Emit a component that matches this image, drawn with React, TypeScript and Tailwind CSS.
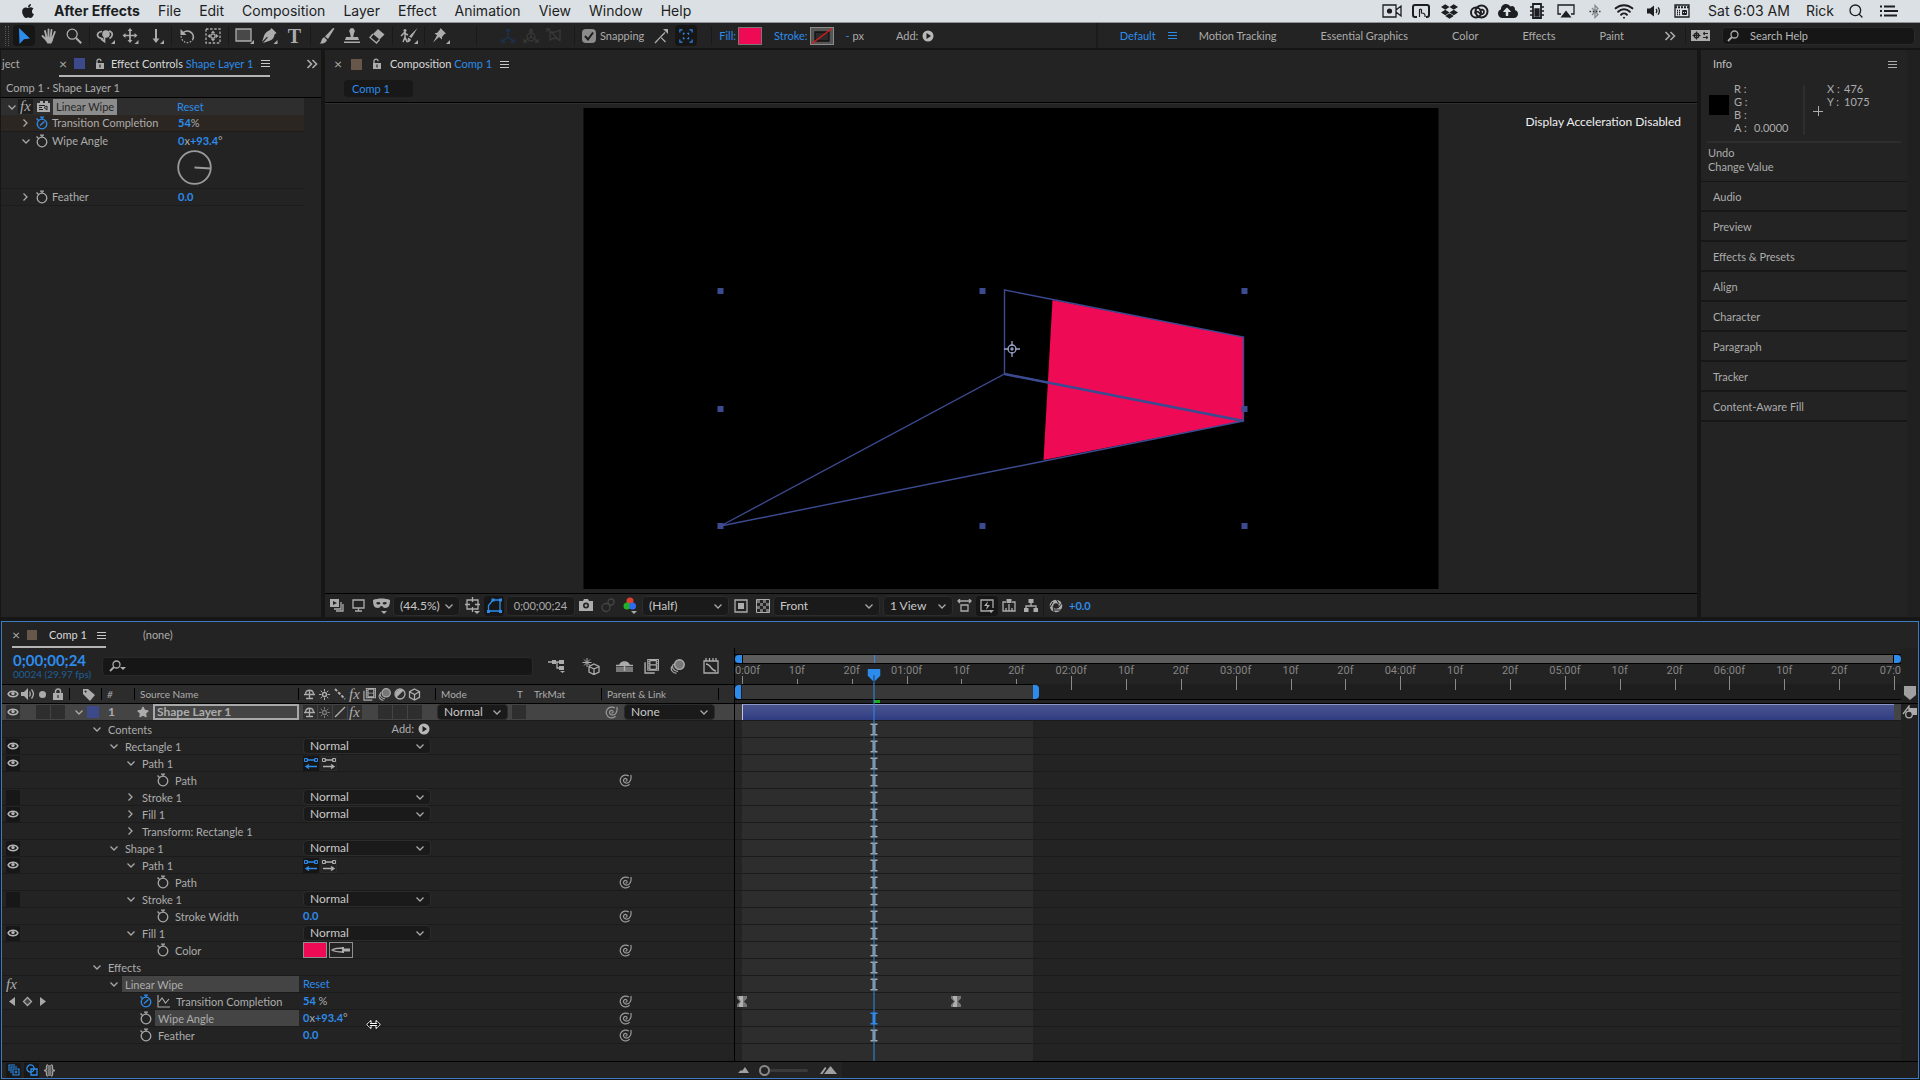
import type { ReactNode } from "react";
import { FaApple, FaCloudUploadAlt, FaDropbox, FaStar } from "react-icons/fa";
import { Search, Wifi } from "lucide-react";

const FRAMES = 210;
const PLAYHEAD = 24;
const WORK_END = 53;

function at(frame: number) {
  return `${(frame / FRAMES) * 100}%`;
}

function Svg(props: { w?: number; h?: number; box?: string; className?: string; children: ReactNode }) {
  const { w = 16, h = 16, box = "0 0 16 16", className = "", children } = props;
  return (
    <svg
      width={w}
      height={h}
      viewBox={box}
      className={`shrink-0 ${className}`}
      fill="none"
      stroke="currentColor"
      strokeWidth="1.3"
      aria-hidden="true"
    >
      {children}
    </svg>
  );
}

/* ---------- small shared icons ---------- */

function Chevron(props: { open?: boolean }) {
  return (
    <Svg w={12} h={12} box="0 0 12 12" className="text-[#a8a8a8]">
      {props.open ? <path d="M2.500 4.500 6 8l3.500-3.500" /> : <path d="M3.500 2.500 7 6 3.500 9.500" />}
    </Svg>
  );
}

function Burger(props: { className?: string }) {
  return (
    <Svg w={9} h={9} box="0 0 9 9" className={props.className}>
      <path strokeWidth="1" d="M0 1.500h9M0 4.500h9M0 7.500h9" />
    </Svg>
  );
}

function Guillemet() {
  return (
    <Svg w={12} h={12} box="0 0 12 12">
      <path strokeWidth="1.600" d="M1.500 2 5.500 6l-4 4M6.500 2l4 4-4 4" />
    </Svg>
  );
}

function OpenLock() {
  return (
    <Svg w={10} h={12} box="0 0 10 12">
      <path d="M2 6V3.200a2 2 0 0 1 4 0" />
      <path fill="currentColor" stroke="none" d="M1 5h8v6H1zM4.400 6.500v3h1.200v-3z" fillRule="evenodd" />
    </Svg>
  );
}

function Stopwatch(props: { on?: boolean }) {
  return (
    <Svg w={14} h={14} box="0 0 14 14" className={props.on ? "text-[#2d8ceb]" : "text-[#a8a8a8]"}>
      <circle cx="7" cy="8" r="4.800" />
      <path d="M5 1.200h4M7 1.200v2M1.500 2.500l2 2" />
      {props.on ? <path d="M5 9.500 9.500 5.500" /> : null}
    </Svg>
  );
}

function Eye() {
  return (
    <Svg w={12} h={10} box="0 0 12 10" className="text-[#b4b4b4]">
      <path strokeWidth="1.500" d="M1 5C3 1.200 9 1.200 11 5 9 8.800 3 8.800 1 5z" />
      <circle cx="6" cy="4.600" r="1.700" fill="currentColor" stroke="none" />
    </Svg>
  );
}

function PickWhip() {
  return (
    <Svg w={13} h={13} box="0 0 13 13" className="text-[#9a9a9a]">
      <path
        strokeWidth="1.200"
        d="M11.800 1C12.800 5 11 9.200 7.600 9.200 5 9.200 3.800 6.800 5 5.200 6.200 3.700 8.400 4.400 8 6.200 7.800 7 7 7.200 6.500 6.800M9.800 2C7.500.4 4 .8 2.200 3.300.2 6.200 1.400 10.600 5 11.700c2 .6 4.200 0 5.600-1.500"
      />
    </Svg>
  );
}

function PlayDot() {
  return (
    <Svg w={12} h={12} box="0 0 12 12" className="text-[#b8b8b8]">
      <circle cx="6" cy="6" r="5.500" fill="currentColor" stroke="none" />
      <path d="M4.500 3 9 6 4.500 9z" fill="#1e1e1e" stroke="none" />
    </Svg>
  );
}

function Shy() {
  return (
    <Svg w={13} h={13} box="0 0 13 13">
      <path d="M1 6.500h11M2.500 6C3 1 10 1 10.500 6M6.500 2v9M3 10.500h7" />
    </Svg>
  );
}

function Sun(props: { dim?: boolean }) {
  return (
    <Svg w={13} h={13} box="0 0 13 13" className={props.dim ? "text-[#777]" : ""}>
      <circle cx="6.500" cy="6.500" r="2" />
      <path
        strokeWidth="1"
        d="M6.500 1v2.500M6.500 9.500V12M1 6.500h2.500M9.500 6.500H12M2.700 2.700l1.600 1.600M8.700 8.700l1.600 1.600M10.300 2.700 8.700 4.300M4.300 8.700l-1.600 1.600"
      />
    </Svg>
  );
}

function Fx() {
  return <span className="font-['Liberation_Serif',serif] text-[15px] leading-none italic">fx</span>;
}

function FilmStack(props: { size?: number }) {
  const s = props.size ?? 13;
  return (
    <Svg w={s} h={s} box="0 0 14 14">
      <path d="M1 3v10h9" />
      <path fill="currentColor" stroke="none" fillRule="evenodd" d="M3 0h11v11H3zM6 2v3h5V2zM6 6v3h5V6z" />
      <path stroke="#222" strokeWidth="1" strokeDasharray="1 1" d="M4.500 1V11M12.500 1V11" />
    </Svg>
  );
}

function Blur(props: { size?: number }) {
  const s = props.size ?? 13;
  return (
    <Svg w={s} h={s} box="0 0 14 14">
      <circle cx="8.800" cy="5.200" r="4.500" fill="#777" />
      <path strokeWidth="1.100" d="M3.300 4.500C1 7.500 3.500 11.700 7.500 11.500M1.800 6.700C0 9.700 2.500 13.500 6 13.200" />
    </Svg>
  );
}

function Cube() {
  return (
    <Svg w={13} h={13} box="0 0 13 13">
      <path d="M6.500 1 11.500 3.700v5.600L6.500 12l-5-2.700V3.700zM1.500 3.700l5 2.800 5-2.800M6.500 6.500V12" />
    </Svg>
  );
}

function IBeam(props: { active?: boolean }) {
  return (
    <Svg w={8} h={13} box="0 0 8 13" className={props.active ? "text-[#2d8ceb]" : "text-[#a8a8a8]"}>
      <path strokeWidth="1.500" d="M.5 1.200h7M.5 11.800h7" />
      <path strokeWidth="3" d="M4 1v11" />
    </Svg>
  );
}

/* ---------- controls ---------- */

function SelectBox(props: { value: string; label: string; className: string }) {
  return (
    <span className={`relative flex shrink-0 items-center rounded-sm border border-[#2c2c2c] bg-[#1a1a1a] ${props.className}`}>
      <select
        aria-label={props.label}
        defaultValue={props.value}
        className="h-full w-full appearance-none bg-transparent pl-1.5 text-[12px] leading-none text-[#c8c8c8] outline-none"
      >
        <option>{props.value}</option>
      </select>
      <span className="pointer-events-none absolute right-1">
        <Chevron open />
      </span>
    </span>
  );
}

function IconButton(props: { label: string; active?: boolean; className?: string; children: ReactNode }) {
  const { label, active, className = "w-[25px]", children } = props;
  return (
    <span className={`flex shrink-0 justify-center ${className}`}>
      <button
        type="button"
        aria-label={label}
        className={`flex h-[21px] w-[22px] items-center justify-center rounded-sm ${active ? "bg-[#161616]" : ""}`}
      >
        {children}
      </button>
    </span>
  );
}

function Sep(props: { className?: string }) {
  return <span className={`h-[19px] w-px shrink-0 bg-[#191919] ${props.className ?? "mx-[3px]"}`} />;
}

/* ---------- macOS menu bar ---------- */

const MENUS = ["File", "Edit", "Composition", "Layer", "Effect", "Animation", "View", "Window", "Help"];

const STATUS: ReactNode[] = [
  <Svg w={20} h={14} box="0 0 20 14">
    <path d="M1 1h13v12H1zM14 6l5-4v10l-5-4" />
    <circle cx="7.500" cy="7" r="2.600" fill="currentColor" stroke="none" />
  </Svg>,
  <Svg w={18} h={14} box="0 0 18 14">
    <path strokeWidth="2" d="M5 13H3a2 2 0 0 1-2-2V3a2 2 0 0 1 2-2h12a2 2 0 0 1 2 2v8a2 2 0 0 1-2 2h-1" />
    <path strokeWidth="1.200" d="M7.500 13V6c0-1.300 2-1.300 2 0v3c2.500 0 3.500.5 3.500 2.500V13" />
  </Svg>,
  <FaDropbox size={17} />,
  <Svg w={20} h={15} box="0 0 20 15">
    <circle cx="12.500" cy="7.500" r="6" strokeWidth="2" />
    <circle cx="7" cy="8.500" r="5" strokeWidth="2" />
    <path strokeWidth="1.800" d="M6 9.500C6 7 9 7 10.500 9c1.500 2 4.500 1.500 4.500-1.200 0-2.300-3-3-4-1" />
  </Svg>,
  <FaCloudUploadAlt size={20} />,
  <Svg w={14} h={16} box="0 0 14 16">
    <path d="M3 1h8v14H3z" strokeWidth="1.800" />
    <path d="M5 6h4v7H5z" fill="currentColor" />
    <path d="M0 4h3M0 8h3M0 12h3M11 4h3M11 8h3M11 12h3" />
  </Svg>,
  <Svg w={18} h={14} box="0 0 18 14">
    <path d="M4 10H1V1h16v9h-3" />
    <path d="m9 6.500 5.500 7h-11z" fill="currentColor" stroke="none" />
  </Svg>,
  <Svg w={12} h={15} box="0 0 12 15" className="text-[#85898e]">
    <path d="m3 4 6 6.500-3 3v-12l3 3L3 11" />
    <path stroke="#33363a" strokeWidth="1.600" strokeDasharray="1.600 1.600" d="M.5 7.500h11" />
  </Svg>,
  <Wifi size={20} strokeWidth={2.4} />,
  <Svg w={14} h={14} box="0 0 14 14">
    <path d="M1 4.500h3L8 1.500v11l-4-3H1z" fill="currentColor" stroke="none" />
    <path d="M10 5c1 1.200 1 2.800 0 4M12 3.300c1.800 2.300 1.800 5 0 7.400" />
  </Svg>,
  <Svg w={16} h={14} box="0 0 16 14">
    <path d="M1 1h14v12H1z" />
    <path d="M1 3.200h14" strokeWidth="2" strokeDasharray="2 1" />
    <path strokeDasharray="1 1" d="M3 6.500h3M3 8.500h3M3 10.500h3" />
    <path strokeWidth="1" d="M8.500 7.500v-1h4v4h-4v-3h4M8.500 9.500h4M10.500 6.500v4" />
  </Svg>,
];

function MenuBar() {
  return (
    <header className="flex h-[23px] shrink-0 items-center justify-between border-b border-[#8f9296] bg-[#dbe0e5] pr-[22px] pl-[20px] font-[Inter,sans-serif] text-[14px] text-[#1c1e21]">
      <nav className="flex items-center gap-[18px]" aria-label="Application menu">
        <FaApple size={16} />
        <button type="button" className="font-bold">After Effects</button>
        {MENUS.map((m) => (
          <button key={m} type="button">{m}</button>
        ))}
      </nav>
      <div className="flex items-center">
        {STATUS.map((icon, i) => (
          <span key={i} className="flex w-[29px] justify-center">{icon}</span>
        ))}
        <span className="pl-3">Sat 6:03 AM</span>
        <span className="pl-4">Rick</span>
        <Search size={16} className="ml-3.5" />
        <Svg w={18} h={12} box="0 0 18 12" className="ml-4">
          <path strokeWidth="1.800" d="M0 1.500h2M4 1.500h11M0 6h2M4 6h14M0 10.500h2M4 10.500h13" />
        </Svg>
      </div>
    </header>
  );
}

/* ---------- tool bar ---------- */

const corner = <path d="M16 12v4h-4z" fill="currentColor" stroke="none" />;

const TOOL_GROUPS: { label: string; icon: ReactNode; active?: boolean }[][] = [
  [
    {
      label: "Selection",
      active: true,
      icon: (
        <Svg className="text-[#2d8ceb]">
          <path d="m3 0 11 10.500-6 .8L3.500 16z" fill="currentColor" stroke="none" />
        </Svg>
      ),
    },
    {
      label: "Hand",
      icon: (
        <Svg>
          <path strokeWidth="1.900" strokeLinecap="round" d="M5.500 9 4 3M7.500 8V1.500M9.800 8l.7-6M11.800 9l2-5M5 11.500 1.500 8" />
          <path d="M4.500 8.500h8.300l-1 4-1.500 3H6.500l-2.500-4z" fill="currentColor" stroke="none" />
        </Svg>
      ),
    },
    {
      label: "Zoom",
      icon: (
        <Svg>
          <circle cx="6.200" cy="6.200" r="5" />
          <path strokeWidth="2" d="m10 10 5.200 5.200" />
        </Svg>
      ),
    },
  ],
  [
    {
      label: "Orbit camera",
      icon: (
        <Svg w={19} h={16} box="0 0 19 16">
          <circle cx="10" cy="6" r="3.800" fill="currentColor" stroke="none" />
          <path strokeWidth="1.700" d="M6 3.500C1 4 .5 7.500 3 9.500l4 1.500M13 3c4 1 4.500 5 .5 7.500M8.500 9v4.500L5 11" />
          <path d="M19 12v4h-4z" fill="currentColor" stroke="none" />
        </Svg>
      ),
    },
    {
      label: "Track XY camera",
      icon: (
        <Svg w={17}>
          <path strokeWidth="1.700" d="M7.500 2v11M2 7.500h11" />
          <path d="M7.500 0 10 3H5zM7.500 15 5 12h5zM0 7.500 3 5v5zM15 7.500 12 10V5z" fill="currentColor" stroke="none" />
          {corner}
        </Svg>
      ),
    },
    {
      label: "Track Z camera",
      icon: (
        <Svg>
          <path strokeWidth="2" d="M8 1v11" />
          <path d="M8 15 4.500 10.500h7z" fill="currentColor" stroke="none" />
          {corner}
        </Svg>
      ),
    },
  ],
  [
    {
      label: "Rotation",
      icon: (
        <Svg w={17}>
          <path strokeWidth="1.700" d="M3 5.500A6 6 0 0 1 13.500 11" />
          <path strokeDasharray="1.500 1.500" d="M13.500 11A6 6 0 1 1 2.300 6" />
          <path d="M1 1v6h6z" fill="currentColor" stroke="none" />
        </Svg>
      ),
    },
    {
      label: "Pan behind",
      icon: (
        <Svg>
          <path strokeDasharray="2.500 1.600" d="M1 1h14v14H1z" />
          <circle cx="8" cy="8" r="2.200" />
          <path d="M8 2.500 10 5H6zM8 13.500 6 11h4zM2.500 8 5 6v4zM13.500 8 11 10V6z" fill="currentColor" stroke="none" />
        </Svg>
      ),
    },
  ],
  [
    {
      label: "Rectangle",
      icon: (
        <Svg w={19} h={17} box="0 0 19 17">
          <path d="M1 2h15v12H1z" fill="#484848" />
          <path d="M19 13v4h-4z" fill="currentColor" stroke="none" />
        </Svg>
      ),
    },
    {
      label: "Pen",
      icon: (
        <Svg w={17}>
          <path
            d="m10 0 5 5-2 1.500c-.5 4-3 6-7 7L1.500 15l4.800-5.500-.8-.8L.5 14 2 9.500c1-4 3-6 6.500-7.500z"
            fill="currentColor"
            stroke="none"
          />
          {corner}
        </Svg>
      ),
    },
    {
      label: "Type",
      icon: <span className="font-['Liberation_Serif',serif] text-[20px] leading-none font-bold">T</span>,
    },
  ],
  [
    {
      label: "Brush",
      icon: (
        <Svg>
          <path
            d="M15.500.5 9 11 6 8.500 14 0zM5.300 9.300 8 12c-.8 3-4.500 4-7.500 3.500C3 14.500 2 10 5.300 9.300z"
            fill="currentColor"
            stroke="none"
          />
        </Svg>
      ),
    },
    {
      label: "Clone stamp",
      icon: (
        <Svg>
          <path
            d="M8 0a3 3 0 0 1 2 5l-.8 4H14l1 3H1l1-3h4.800L6 5a3 3 0 0 1 2-5zM0 13.500h16V15H0z"
            fill="currentColor"
            stroke="none"
          />
        </Svg>
      ),
    },
    {
      label: "Eraser",
      icon: (
        <Svg>
          <path d="m9 1 6.500 5.500-5 5L4 6z" fill="currentColor" stroke="none" />
          <path d="M4 6 1 9.500 7.500 15l3-3.500" />
        </Svg>
      ),
    },
  ],
  [
    {
      label: "Roto brush",
      icon: (
        <Svg w={18} h={16} box="0 0 18 16">
          <circle cx="5" cy="2.500" r="1.500" fill="currentColor" stroke="none" />
          <path strokeWidth="1.500" d="M5 4v5l-2 5M5 9l2 5M1 8l3-3 4 2" />
          <path
            d="M17.500 0 11.500 10 9 8.500zM8.500 9.500l2.500 2c-.5 2-2 3-4.500 3 1.500-1 .5-4 2-5zM18 12v4h-4z"
            fill="currentColor"
            stroke="none"
          />
        </Svg>
      ),
    },
  ],
  [
    {
      label: "Puppet pin",
      icon: (
        <Svg w={18} h={16} box="0 0 18 16">
          <path
            d="m8.500 0 5.500 5.500-1.500.5-2.500 3v2.500L7 9 1 14.500 5 7.500 2.500 5H5l3-3.500zM18 12v4h-4z"
            fill="currentColor"
            stroke="none"
          />
        </Svg>
      ),
    },
  ],
];

function ToolBar() {
  return (
    <div className="flex h-[27px] shrink-0 items-center border-b-2 border-[#151515] bg-[#232323] pr-[5px]">
      <span className="mr-0.5 ml-[5px] h-5 w-1 shrink-0 border-x border-dotted border-[#555]" />
      {TOOL_GROUPS.map((group, i) => (
        <div key={i} className="flex items-center">
          {i > 0 ? <Sep /> : null}
          {group.map((t) => (
            <IconButton key={t.label} label={t.label} active={t.active}>{t.icon}</IconButton>
          ))}
        </div>
      ))}
      <Sep className="mr-[19px] ml-[23px]" />
      <div className="flex items-center text-[#383838]">
        <IconButton label="Local axis" className="w-[23px] text-[#1b3350]">
          <Svg>
            <path d="M8 9V2M8 9l-5 4M8 9l5 4M6 3.500 8 1l2 2.500M2 10.500V14h3.500M14 10.500V14h-3.500" />
          </Svg>
        </IconButton>
        <IconButton label="World axis" className="w-[23px]">
          <Svg>
            <circle cx="8" cy="9" r="4" />
            <path d="M8 9V2M8 9l-6 4M8 9l6 4M6 3.500 8 1l2 2.500M1 11v3h3M15 11v3h-3" />
          </Svg>
        </IconButton>
        <IconButton label="View axis" className="w-[23px]">
          <Svg>
            <path d="M4 4c4 1 6 0 10-2v10c-3-2-6-3-10 0zM2 1l12 12M1 4V1h3" />
          </Svg>
        </IconButton>
      </div>
      <Sep className="mr-[7px] ml-[9px]" />
      <label className="flex items-center gap-1">
        <span className="relative flex size-[14px]">
          <input type="checkbox" defaultChecked className="size-[14px] appearance-none rounded-sm bg-[#8b8b8b]" />
          <Svg w={14} h={14} box="0 0 14 14" className="pointer-events-none absolute text-[#1c1c1c]">
            <path strokeWidth="2" d="m3 7 3 3.500L11 3.500" />
          </Svg>
        </span>
        Snapping
      </label>
      <IconButton label="Snap edges" className="ml-1 w-[25px]">
        <Svg>
          <path d="M2 15 7.500 9l5 5M7.500 9 12 4.500" strokeDasharray="8 1" />
          <path d="M10 1h5v5z" fill="currentColor" stroke="none" />
        </Svg>
      </IconButton>
      <IconButton label="Snap features" active className="w-[25px] text-[#2d8ceb]">
        <Svg w={14} h={14}>
          <path d="M1 4V1h3M12 1h3v3M15 12v3h-3M4 15H1v-3M5 6.500V5h1.500M9.500 5H11v1.500M11 9.500V11H9.500M6.500 11H5V9.500" />
        </Svg>
      </IconButton>
      <Sep className="mr-[7px] ml-[13px]" />
      <button type="button" className="text-[#2d8ceb]">Fill:</button>
      <button type="button" aria-label="Fill color" className="ml-0.5 h-[18px] w-6 border border-[#777] bg-[#ee0a55]" />
      <button type="button" className="ml-3 text-[#2d8ceb]">Stroke:</button>
      <button type="button" aria-label="Stroke color" className="ml-0.5 h-[18px] w-6 border border-[#8b8b8b] bg-[#555]">
        <Svg w={22} h={16} box="0 0 22 16">
          <path d="M4 4h14v9H4z" fill="#2a2a2a" stroke="#111" />
          <path d="M1 15.500 21 .5" stroke="#e01b1b" />
        </Svg>
      </button>
      <span className="ml-3"><span className="text-[#2d8ceb]">-</span> px</span>
      <button type="button" className="ml-8 flex items-center gap-1">Add:<PlayDot /></button>

      <nav className="ml-auto flex h-full items-center border-l-2 border-[#1b1b1b] pl-[22px]" aria-label="Workspaces">
        <button type="button" className="text-[#2d8ceb]">Default</button>
        <Burger className="ml-3 text-[#2d8ceb]" />
        <button type="button" className="ml-[22px]">Motion Tracking</button>
        <button type="button" className="ml-[44px]">Essential Graphics</button>
        <button type="button" className="ml-[44px]">Color</button>
        <button type="button" className="ml-[44px]">Effects</button>
        <button type="button" className="ml-[44px]">Paint</button>
      </nav>
      <button type="button" aria-label="More workspaces" className="ml-[40px]"><Guillemet /></button>
      <Sep className="mr-[5px] ml-[9px]" />
      <Svg w={19} h={11} box="0 0 19 11">
        <path d="M0 0h19v11H0z" fill="currentColor" stroke="none" />
        <circle cx="5.500" cy="5.500" r="2.300" stroke="#222" strokeWidth="1.500" />
        <path stroke="#222" strokeWidth="1" d="M5.500 1.500v8M1.500 5.500h8M12 3.500h5M12 7.500h5M14 2l-2 1.500L14 5M15 6l2 1.500L15 9" />
      </Svg>
      <label className="ml-3 flex h-[18px] w-[193px] items-center rounded-sm border border-[#2a2a2a] bg-[#161616] pl-1">
        <Svg w={12} h={12} box="0 0 12 12">
          <circle cx="7.500" cy="4.500" r="3.500" />
          <path strokeWidth="1.800" d="M5 7 1 11" />
        </Svg>
        <input
          aria-label="Search Help"
          placeholder="Search Help"
          className="ml-[11px] w-full bg-transparent outline-none placeholder:text-[#b8b8b8]"
        />
      </label>
    </div>
  );
}

/* ---------- effect controls ---------- */

function EffectControls() {
  return (
    <section className="flex w-80 shrink-0 flex-col bg-[#232323]">
      <div className="flex h-[27px] items-center pl-px">
        <span className="w-[57px]">ject</span>
        <div className="flex h-full items-center border-b-2 border-[#b4b4b4] pt-0.5">
          <span className="w-[15px] text-[14px] leading-none">×</span>
          <span className="size-[11px] bg-[#3c4a8c]" />
          <span className="mr-1.5 ml-2.5"><OpenLock /></span>
          <span className="whitespace-nowrap text-[#d8d8d8]">Effect Controls <span className="text-[#2d8ceb]">Shape Layer 1</span></span>
          <Burger className="ml-2 text-[#c8c8c8]" />
        </div>
        <span className="mr-[3px] ml-auto"><Guillemet /></span>
      </div>
      <div className="flex h-[21px] items-center border-b border-black pt-0.5 pl-[5px]">Comp 1 · Shape Layer 1</div>
      <div className="mr-[17px]">
        <div className="flex h-[17px] items-center bg-[#2e2e2e] pl-[5px]">
          <Chevron open />
          <span className="flex h-[15px] w-[15px] items-center justify-center bg-[#1e1e1e]"><Fx /></span>
          <Svg w={13} h={13} box="0 0 13 13" className="ml-1">
            <path d="M0 3h3V1h3v2h2V1h3v2h2v9H0z" fill="currentColor" stroke="none" />
            <path stroke="#222" strokeWidth="1" d="M2 5.500h6M2 7.500h3M2 9.500h4M7 7.500l3-1.500v4z" />
          </Svg>
          <span className="ml-[3px] bg-[#8c8c8c] px-[3px] text-[#262626]">Linear Wipe</span>
          <button type="button" className="ml-auto w-[127px] text-left text-[#2d8ceb]">Reset</button>
        </div>
        <div className="flex h-[17px] items-center border-b border-[#1c1c1c] bg-[#2b2622] pl-[19px]">
          <Chevron />
          <span className="mr-[3px] ml-[3px]"><Stopwatch on /></span>
          Transition Completion
          <span className="ml-auto w-[126px]"><span className="font-bold text-[#2d8ceb]">54</span>%</span>
        </div>
        <div className="flex h-[17px] items-center pl-[19px]">
          <Chevron open />
          <span className="mr-[3px] ml-[3px]"><Stopwatch /></span>
          Wipe Angle
          <span className="ml-auto w-[126px]">
            <span className="font-bold text-[#2d8ceb]">0</span>x<span className="font-bold text-[#2d8ceb]">+93.4</span>°
          </span>
        </div>
        <div className="flex h-[40px] justify-end border-b border-[#1c1c1c] pt-px">
          <div className="w-[127px]">
            <Svg w={35} h={35} box="0 0 35 35" className="text-[#9a9a9a]">
              <circle cx="17.500" cy="17.500" r="16.300" strokeWidth="1.800" />
              <path strokeWidth="2" d="m17.500 17.500 16 1" />
            </Svg>
          </div>
        </div>
        <div className="flex h-[17px] items-center border-b border-[#1c1c1c] pl-[19px]">
          <Chevron />
          <span className="mr-[3px] ml-[3px]"><Stopwatch /></span>
          Feather
          <span className="ml-auto w-[126px] font-bold text-[#2d8ceb]">0.0</span>
        </div>
      </div>
    </section>
  );
}

/* ---------- composition viewer ---------- */

const HANDLES = [
  [137, 183], [399, 183], [661, 183],
  [137, 301], [661, 301],
  [137, 418], [399, 418], [661, 418],
];

function CompCanvas() {
  return (
    <svg viewBox="0 0 855 481" className="h-full w-full" role="img" aria-label="Comp 1">
      <rect width="855" height="481" fill="#000" />
      <polygon points="469,192 660,229 660,313 460,352" fill="#ee0a55" />
      <g fill="none" stroke="#3c4a90" strokeWidth="1.400">
        <polygon points="421,182 660,229 660,313 421,266" />
        <polygon points="421,266 660,313 137,418" />
        <path d="M421 266 660 313" strokeWidth="2.400" />
      </g>
      {HANDLES.map(([x, y]) => (
        <rect key={`${x}-${y}`} x={x - 3} y={y - 3} width="6" height="6" fill="#3c4a90" />
      ))}
      <g transform="translate(428.5 241)" fill="none" stroke="#9aa4cc" strokeWidth="1.300">
        <circle r="4" />
        <circle r="1" />
        <path d="M0-8v5M0 8V3M-8 0h5M8 0H3" />
      </g>
    </svg>
  );
}

function ViewerBar() {
  return (
    <div className="flex h-6 shrink-0 items-center border-t border-black pl-[5px]">
      <Svg w={14} h={13} box="0 0 14 13">
        <path d="M0 0h9v8H0z" fill="currentColor" stroke="none" />
        <path d="m3 2 4 2-4 2z" fill="#222" stroke="none" />
        <path d="M11 3v7H4M13 5v7H6" />
      </Svg>
      <Svg w={13} h={13} box="0 0 13 13" className="ml-2"><path d="M1 1h11v8H1zM6.500 9v3M3 12h7" /></Svg>
      <Svg w={17} h={16} box="0 0 17 16" className="ml-2">
        <path
          d="M0 2c5-2 12-2 17 0 0 5-1 8-5 8-2 0-2-2-3.500-2S7 10 5 10C1 10 0 7 0 2zM3 5c1.500 2 3.500 2 4.500 0-1-1.500-3.500-1.500-4.500 0zm6.500 0c1 2 3 2 4.500 0-1-1.500-3.500-1.500-4.500 0z"
          fillRule="evenodd"
          fill="currentColor"
          stroke="none"
        />
        <path d="M8 13h6l-3 3z" fill="currentColor" stroke="none" />
      </Svg>
      <SelectBox label="Magnification" value="(44.5%)" className="ml-[3px] h-5 w-[67px]" />
      <Svg w={15} h={17} box="0 0 15 17" className="ml-[5px]">
        <path d="M2 3h11v9H2zM7.500 0v5M7.500 10v5M0 7.500h5M10 7.500h5" />
        <path d="M9 14h6l-3 3z" fill="currentColor" stroke="none" />
      </Svg>
      <button type="button" aria-label="Toggle mask visibility" className="ml-1 flex h-5 w-5 items-center justify-center rounded-sm bg-[#161616] text-[#2d8ceb]">
        <Svg w={15} h={15} box="0 0 15 15">
          <path d="M1.500 13V7.500L6 2h7v11z" />
          <path d="M0 12h3v3H0zM12 12h3v3h-3zM12 .5h3v3h-3zM4.500.5h3v3h-3z" fill="currentColor" stroke="none" />
        </Svg>
      </button>
      <button type="button" className="ml-0.5 h-5 w-[69px] rounded-sm border border-[#2c2c2c] bg-[#1a1a1a]">0;00;00;24</button>
      <Svg w={14} h={13} box="0 0 14 13" className="ml-1">
        <path d="M0 2h4l1-2h4l1 2h4v10H0zM7 3.500a3 3 0 1 0 0 6 3 3 0 0 0 0-6z" fillRule="evenodd" fill="currentColor" stroke="none" />
        <circle cx="7" cy="6.500" r="1.300" fill="currentColor" stroke="none" />
      </Svg>
      <Svg w={14} h={15} box="0 0 14 15" className="ml-2 text-[#444]"><circle cx="5" cy="9.500" r="4" /><circle cx="10" cy="4" r="3" /></Svg>
      <Svg w={14} h={17} box="0 0 14 17" className="ml-2">
        <circle cx="7" cy="4" r="3.500" fill="#e04030" stroke="none" />
        <circle cx="4" cy="9" r="3.500" fill="#22b024" stroke="none" />
        <circle cx="9.500" cy="9" r="3.500" fill="#2d6ceb" stroke="none" />
        <path d="M8 14h6l-3 3z" fill="currentColor" stroke="none" />
      </Svg>
      <SelectBox label="Resolution" value="(Half)" className="ml-[5px] h-5 w-[87px]" />
      <Svg w={14} h={14} box="0 0 14 14" className="ml-[5px]">
        <path d="M1 1h12v12H1z" /><path d="M4 4h6v6H4z" fill="currentColor" stroke="none" />
      </Svg>
      <Svg w={14} h={14} box="0 0 14 14" className="ml-2">
        <path d="M.5.5h13v13H.5z" strokeWidth="1" />
        <path d="M1 1h3v3H1zM7 1h3v3H7zM4 4h3v3H4zM10 4h3v3h-3zM1 7h3v3H1zM7 7h3v3H7zM4 10h3v3H4zM10 10h3v3h-3z" fill="#777" stroke="none" />
      </Svg>
      <SelectBox label="3D view" value="Front" className="ml-[3px] h-5 w-[107px]" />
      <SelectBox label="View layout" value="1 View" className="ml-[3px] h-5 w-[70px]" />
      <Svg w={15} h={13} box="0 0 15 13" className="ml-1"><path d="M1 2h13M3 0 1 2l2 2M12 0l2 2-2 2M4 6h7v6H4z" /></Svg>
      <button type="button" aria-label="Fast previews" className="ml-1 flex h-5 w-[22px] items-center justify-center rounded-sm bg-[#161616]">
        <Svg w={14} h={14} box="0 0 14 14"><path d="M9 12H1V1h12v8" /><path d="m8 2-4 5h3l-1 4 4-5H7zM8 11h6l-3 3z" fill="currentColor" stroke="none" /></Svg>
      </button>
      <Svg w={14} h={13} box="0 0 14 13" className="ml-1"><path d="M4 3H1v9h12V3h-3M4 12V9M7 12V5M10 12V9" /><path d="M4.500 0h5v4h-5z" fill="currentColor" stroke="none" /></Svg>
      <Svg w={14} h={13} box="0 0 14 13" className="ml-2"><path d="M4.500 0h5v4h-5zM0 9h4.500v4H0zM9.500 9H14v4H9.500z" fill="currentColor" stroke="none" /><path d="M7 4v3M2 9V7h10v2" /></Svg>
      <Sep className="mx-[5px]" />
      <Svg w={14} h={14} box="0 0 14 14"><circle cx="7" cy="7" r="4.500" strokeWidth="3.500" /><path stroke="#222" strokeWidth="1" d="M7 0l3 5M13 4l-4 5M12 11H5M5 13 4 7M1 8l3-5" /></Svg>
      <span className="ml-1.5 font-bold text-[#2d8ceb]">+0.0</span>
    </div>
  );
}

function Composition() {
  return (
    <section className="flex min-w-0 flex-1 flex-col bg-[#232323]">
      <div className="flex h-[27px] shrink-0 items-center pt-px pl-[9px]">
        <span className="w-[17px] text-[14px] leading-none">×</span>
        <span className="size-[11px] bg-[#67574a]" />
        <span className="mr-2 ml-2.5"><OpenLock /></span>
        <span className="text-[#d8d8d8]">Composition <span className="text-[#2d8ceb]">Comp 1</span></span>
        <Burger className="ml-2 text-[#c8c8c8]" />
      </div>
      <div className="flex h-[27px] shrink-0 items-start border-b border-[#303030] pt-[3px] pl-[19px] shadow-[inset_0_-1px_0_#000]">
        <button type="button" className="h-[17px] w-[69px] rounded-sm bg-[#181818] pl-2 text-left text-[#2d8ceb]">Comp 1</button>
      </div>
      <div className="relative min-h-0 flex-1">
        <div className="absolute inset-0 py-1">
          <CompCanvas />
        </div>
        <p className="absolute top-2.5 right-4 text-[12px] text-[#f0f0f0]">Display Acceleration Disabled</p>
      </div>
      <ViewerBar />
    </section>
  );
}

/* ---------- right column ---------- */

const PANELS = ["Audio", "Preview", "Effects & Presets", "Align", "Character", "Paragraph", "Tracker", "Content-Aware Fill"];

function SidePanels() {
  return (
    <aside className="w-[219px] shrink-0 bg-[#202020] pr-[13px]">
      <div className="h-full bg-[#232323]">
        <div className="flex h-[27px] items-center justify-between pt-px pr-[10px] pl-3">
          <h2 className="text-[#c0c0c0]">Info</h2>
          <Burger />
        </div>
        <div className="mx-1.5 flex h-[66px] border-b-2 border-[#2e2e2e] pt-[5px]">
          <span className="mt-[13px] ml-0.5 size-5 bg-black" />
          <dl className="ml-[5px] grid w-[69px] grid-cols-[20px_1fr] content-start leading-[13px]">
            <dt>R :</dt><dd />
            <dt>G :</dt><dd />
            <dt>B :</dt><dd />
            <dt>A :</dt><dd>0.0000</dd>
          </dl>
          <span className="mt-[3px] h-[50px] w-0.5 bg-[#2e2e2e]" />
          <Svg w={10} h={10} box="0 0 10 10" className="mt-6 ml-2"><path strokeWidth="1" d="M5.500 0v10M0 5.500h10" /></Svg>
          <dl className="ml-1 grid grid-cols-[17px_1fr] content-start leading-[13px]">
            <dt>X :</dt><dd>476</dd>
            <dt>Y :</dt><dd>1075</dd>
          </dl>
        </div>
        <div className="h-[39px] border-b border-[#151515] pt-[3px] pl-[7px] leading-[14px]">
          <p>Undo</p>
          <p>Change Value</p>
        </div>
        {PANELS.map((p) => (
          <button key={p} type="button" className="flex h-[30px] w-full items-center border-b-2 border-[#171717] pt-0.5 pl-3 text-left">
            {p}
          </button>
        ))}
      </div>
    </aside>
  );
}

/* ---------- timeline ---------- */

type Row = {
  name: string;
  level: 0 | 1 | 2 | 3 | 4;
  open?: boolean;
  eye?: "on" | "off";
  value?: "mode" | "direction" | "zero" | "color" | "reset" | "percent" | "angle" | "add";
  whip?: boolean;
  selected?: boolean;
  animated?: boolean;
  fx?: boolean;
};

const ROWS: Row[] = [
  { name: "Contents", level: 0, open: true, value: "add" },
  { name: "Rectangle 1", level: 1, open: true, eye: "on", value: "mode" },
  { name: "Path 1", level: 2, open: true, eye: "on", value: "direction" },
  { name: "Path", level: 4, whip: true },
  { name: "Stroke 1", level: 2, eye: "off", value: "mode" },
  { name: "Fill 1", level: 2, eye: "on", value: "mode" },
  { name: "Transform: Rectangle 1", level: 2 },
  { name: "Shape 1", level: 1, open: true, eye: "on", value: "mode" },
  { name: "Path 1", level: 2, open: true, eye: "on", value: "direction" },
  { name: "Path", level: 4, whip: true },
  { name: "Stroke 1", level: 2, open: true, eye: "off", value: "mode" },
  { name: "Stroke Width", level: 4, value: "zero", whip: true },
  { name: "Fill 1", level: 2, open: true, eye: "on", value: "mode" },
  { name: "Color", level: 4, value: "color", whip: true },
  { name: "Effects", level: 0, open: true },
  { name: "Linear Wipe", level: 1, open: true, value: "reset", selected: true, fx: true },
  { name: "Transition Completion", level: 3, value: "percent", whip: true, animated: true },
  { name: "Wipe Angle", level: 3, value: "angle", whip: true, selected: true },
  { name: "Feather", level: 3, value: "zero", whip: true },
];

const INDENT = ["pl-[21px]", "pl-[38px]", "pl-[55px]", "pl-[69px]", "pl-[86px]"];

function Direction() {
  return (
    <span className="flex gap-0.5">
      <span className="flex h-[15px] w-4 items-center justify-center bg-[#161616] text-[#2d8ceb]">
        <Svg w={14} h={11} box="0 0 14 11"><path d="M2.500 2h9M2 8.500h11M5 6.500 2 8.500l3 2" /><path strokeWidth="1" d="M.5.5h3v3h-3zM10.500.5h3v3h-3z" /></Svg>
      </span>
      <span className="flex h-[15px] w-4 items-center justify-center border border-[#2c2c2c] text-[#b0b0b0]">
        <Svg w={14} h={11} box="0 0 14 11"><path d="M2.500 2h9M1 8.500h11M9 6.500l3 2-3 2" /><path strokeWidth="1" d="M.5.5h3v3h-3zM10.500.5h3v3h-3z" /></Svg>
      </span>
    </span>
  );
}

function RowValue(props: { row: Row }) {
  switch (props.row.value) {
    case "add":
      return <button type="button" className="flex w-[127px] items-center justify-end gap-1">Add:<PlayDot /></button>;
    case "mode":
      return <SelectBox label={`${props.row.name} blend mode`} value="Normal" className="h-4 w-32" />;
    case "direction":
      return <Direction />;
    case "zero":
      return <span className="font-bold text-[#2d8ceb]">0.0</span>;
    case "reset":
      return <button type="button" className="text-[#2d8ceb]">Reset</button>;
    case "percent":
      return <span><span className="font-bold text-[#2d8ceb]">54</span> %</span>;
    case "angle":
      return (
        <>
          <span><span className="font-bold text-[#2d8ceb]">0</span>x<span className="font-bold text-[#2d8ceb]">+93.4</span>°</span>
          {/* scrub cursor */}
          <Svg w={15} h={9} box="0 0 15 9" className="absolute top-2.5 left-[67px] z-10 text-white">
            <path fill="#fff" stroke="#fff" strokeWidth="1" d="M5 .5 .7 4.500 5 8.500V5.500h5v3l4.300-4L10 .5v3H5z" />
            <path stroke="#000" strokeWidth="1.200" d="M2 4.500h11M4.500 2 2 4.500 4.500 7M10.500 2 13 4.500 10.500 7" />
          </Svg>
        </>
      );
    case "color":
      return (
        <span className="flex gap-0.5">
          <button type="button" aria-label="Fill color" className="h-4 w-6 border border-[#8f8f8f] bg-[#ee0a55]" />
          <button type="button" aria-label="Eyedropper" className="flex h-4 w-6 items-center justify-center border border-[#8f8f8f]">
            <Svg w={20} h={8} box="0 0 20 8"><path d="M1 4c3-2 6-2 11-2v4C7 6 4 6 1 4z" /><path d="M11 1h2v1.500h6v3h-6V7h-2z" fill="currentColor" stroke="none" /></Svg>
          </button>
        </span>
      );
    default:
      return null;
  }
}

function TreeRow(props: { row: Row }) {
  const { row } = props;
  const isProp = row.level >= 3;
  return (
    <div className="flex h-[17px] items-center border-b border-[#1b1b1b]">
      <div className="flex w-[68px] shrink-0 items-center pl-1">
        {row.eye ? <span className="flex h-[15px] w-[14px] items-center justify-center bg-[#171717]">{row.eye === "on" ? <Eye /> : null}</span> : null}
        {row.fx ? <Fx /> : null}
        {row.animated ? (
          <Svg w={40} h={11} box="0 0 40 11" className="ml-0.5 text-[#a8a8a8]">
            <path d="M7 1v9L1 5.500zM32 1v9l6-4.500z" fill="currentColor" stroke="none" />
            <path d="m19.500 1.500 4 4-4 4-4-4z" fill="#444" />
          </Svg>
        ) : null}
      </div>
      <div className={`flex w-[229px] shrink-0 items-center gap-0.5 ${INDENT[row.level]}`}>
        {isProp ? <Stopwatch on={row.animated} /> : <Chevron open={row.open} />}
        {row.animated ? (
          <Svg w={16} h={13} box="0 0 16 13"><path d="M3 0v12h12M4 7l3-4 3.500 5L14 4" strokeWidth="1.100" /></Svg>
        ) : null}
        <span className={`flex h-4 flex-1 items-center px-[3px] pt-0.5 whitespace-nowrap ${row.selected ? "bg-[#444]" : ""}`}>{row.name}</span>
      </div>
      <div className="relative flex h-full w-[318px] shrink-0 items-center pl-1">
        <RowValue row={row} />
      </div>
      {row.whip ? <span className="pl-0.5"><PickWhip /></span> : null}
    </div>
  );
}

function HeadCell(props: { className: string; children?: ReactNode }) {
  return <div className={`flex h-3 shrink-0 items-center border-r border-black ${props.className}`}>{props.children}</div>;
}

function Slot(props: { children?: ReactNode; dark?: boolean }) {
  return (
    <span className="flex w-[15px] shrink-0 justify-center">
      <span className={`flex h-[14px] w-[14px] items-center justify-center ${props.dark ? "bg-[#2e2e2e]" : ""}`}>{props.children}</span>
    </span>
  );
}

function LayerTree() {
  return (
    <div className="w-[732px] shrink-0">
      <div className="flex h-9 items-center">
        <div className="w-[100px] pl-[11px] text-[#2d8ceb]">
          <p className="text-[15px] leading-4 font-bold">0;00;00;24</p>
          <p className="text-[10px] leading-3 whitespace-nowrap text-[#1f6098]">00024 (29.97 fps)</p>
        </div>
        <label className="flex h-[19px] w-[431px] items-center rounded-sm border border-[#2a2a2a] bg-[#161616] pl-1.5">
          <Svg w={17} h={12} box="0 0 17 12">
            <circle cx="7.500" cy="4.500" r="3.500" />
            <path strokeWidth="1.800" d="M5 7 1 11" />
            <path d="M11 7h6l-3 3z" fill="currentColor" stroke="none" />
          </Svg>
          <input aria-label="Search layers" className="w-full bg-transparent outline-none" />
        </label>
        <div className="flex items-center gap-4 pl-[15px]">
          <Svg w={18} h={14} box="0 0 18 14"><path d="M0 3h6M6 3h3v6h3M9 3h3" /><path d="M4 1h4v4H4zM11 1h5v4h-5zM11 7h5v4h-5zM12 12h5l-2.500 2z" fill="currentColor" stroke="none" /></Svg>
          <Svg w={18} h={17} box="0 0 18 17"><path strokeWidth="1" d="M5 0v9M.5 4.500h9M2 1.500l6 6M8 1.500l-6 6" /><path d="m12 6 5 2.500V14l-5 2.500L7 14V8.500zM7 8.500l5 2.500 5-2.500M12 11v5.500" /></Svg>
          <Svg w={17} h={14} box="0 0 17 14"><path d="M0 8h17v5H0z" fill="#777" stroke="none" /><path d="M3 7c0-6.500 11-6.500 11 0z" fill="currentColor" stroke="none" /><path d="M8.500 3v9M0 6.500h17" strokeWidth="1.500" /></Svg>
        </div>
        <div className="flex items-center gap-[11px] pl-[11px]">
          <FilmStack size={15} />
          <Blur size={15} />
        </div>
        <Svg w={16} h={16} className="ml-[18px]"><path d="M1 3h14v12H1zM3 0v3M6.500 0v3M10 0v3M13 0v3M3 6c5 0 5 7 10 7" /></Svg>
      </div>
      <div className="flex h-5 items-center border-y border-black bg-[#2c2c2c] text-[10px]">
        <HeadCell className="w-[68px] pl-[3px]">
          <Slot><Eye /></Slot>
          <Slot>
            <Svg w={13} h={12} box="0 0 13 12"><path d="M0 4h3l4-4v12L3 8H0z" fill="currentColor" stroke="none" /><path d="M8.500 3.500c1 1.500 1 3.500 0 5M10.500 1.500c2.300 2.700 2.300 6.300 0 9" /></Svg>
          </Slot>
          <Slot><span className="size-[7px] rounded-full bg-[#aaa]" /></Slot>
          <Slot>
            <Svg w={10} h={12} box="0 0 10 12"><path d="M2.500 6V3.500a2.500 2.500 0 0 1 5 0V6" strokeWidth="1.500" /><path d="M0 5h10v7H0zM4.400 7v3h1.200V7z" fillRule="evenodd" fill="currentColor" stroke="none" /></Svg>
          </Slot>
        </HeadCell>
        <HeadCell className="w-8 justify-end pr-1.5">
          <Svg w={13} h={13} box="0 0 13 13"><path d="M1 1h5l7 6-5 6-7-7zM3.500 2.500a1 1 0 1 0 .1 0z" fillRule="evenodd" fill="currentColor" stroke="none" /></Svg>
        </HeadCell>
        <HeadCell className="w-[33px] pl-[5px] italic">#</HeadCell>
        <HeadCell className="w-[164px] pl-[5px]">Source Name</HeadCell>
        <HeadCell className="w-[137px] pl-[3px]">
          <Slot><Shy /></Slot>
          <Slot><Sun /></Slot>
          <Slot><Svg w={12} h={12} box="0 0 12 12"><path strokeWidth="2" strokeDasharray="3 1.500" d="m1 1 10 10" /></Svg></Slot>
          <Slot><Fx /></Slot>
          <Slot><FilmStack /></Slot>
          <Slot><Blur /></Slot>
          <Slot><Svg w={12} h={12} box="0 0 12 12"><circle cx="6" cy="6" r="5" /><path d="M9.500 2.500A5 5 0 0 0 2.500 9.500z" fill="currentColor" stroke="none" /></Svg></Slot>
          <Slot><Cube /></Slot>
        </HeadCell>
        <HeadCell className="w-[166px] pl-[5px]">
          <span className="w-[76px]">Mode</span>
          <span className="w-[17px]">T</span>
          <span>TrkMat</span>
        </HeadCell>
        <HeadCell className="w-[117px] pl-[5px]">Parent &amp; Link</HeadCell>
      </div>
      <div className="flex h-[17px] items-center border-b border-[#1b1b1b] bg-[#444]">
        <div className="flex w-[71px] shrink-0 pl-[3px]">
          <Slot dark><Eye /></Slot>
          <Slot />
          <Slot dark />
          <Slot dark />
        </div>
        <Chevron open />
        <span className="ml-0.5 size-3 bg-[#3c4a8c]" />
        <span className="ml-[9px] w-[29px] text-[12px] font-bold">1</span>
        <FaStar size={12} />
        <span className="ml-1 flex h-4 w-[146px] items-center border-2 border-[#a8a8a8] pl-0.5 text-[12px] leading-none font-bold">Shape Layer 1</span>
        <div className="flex w-[137px] shrink-0 pl-[3px]">
          <Slot dark><Shy /></Slot>
          <Slot dark><Sun dim /></Slot>
          <Slot dark><Svg w={12} h={12} box="0 0 12 12"><path strokeWidth="1.500" d="M1 11 11 1" /></Svg></Slot>
          <Slot dark><Fx /></Slot>
          <Slot />
          <Slot dark />
          <Slot dark />
          <Slot dark />
        </div>
        <SelectBox label="Layer blend mode" value="Normal" className="ml-px h-4 w-[71px]" />
        <span className="ml-1 size-[14px] bg-[#2e2e2e]" />
        <span className="ml-[79px]"><PickWhip /></span>
        <SelectBox label="Parent" value="None" className="ml-1.5 h-4 w-[91px]" />
      </div>
      {ROWS.map((row, i) => (
        <TreeRow key={i} row={row} />
      ))}
    </div>
  );
}

function tickLabel(i: number) {
  if (i === 0) return "0:00f";
  if (i === 21) return "07:0";
  return i % 3 === 0 ? `0${i / 3}:00f` : `${(i % 3) * 10}f`;
}

function labelAlign(i: number) {
  if (i === 0) return "-left-[7px]";
  if (i === 21) return "-right-[7px]";
  return "-translate-x-1/2";
}

const TICKS = Array.from({ length: 22 }, (_, i) => i);

function Keyframe() {
  return (
    <Svg w={10} h={11} box="0 0 10 11" className="text-[#b0b0b0]">
      <path d="M0 0h10v2.500L7 5.500l3 3V11H0V8.500l3-3-3-3z" fill="#777" stroke="none" />
      <path d="M2 0h4v11H2V8.500l2-3-2-3z" fill="currentColor" stroke="none" />
    </Svg>
  );
}

function Track() {
  return (
    <div className="relative min-w-0 flex-1 overflow-hidden border-l border-black bg-[#232323]">
      <div className="mt-1.5 h-2.5 border-y border-black">
        <div className="flex h-full">
          <span className="w-[7px] rounded-l-full bg-[#2d8ceb]" />
          <span className="flex-1 border-x border-black bg-[#5c5c5c]" />
          <span className="w-[7px] rounded-r-full bg-[#2d8ceb]" />
        </div>
      </div>
      <div className="relative mx-[7px] h-5 font-[Roboto,sans-serif] text-[11px] leading-[14px] text-[#858585]">
        {TICKS.map((i) => (
          <span
            key={i}
            className={`absolute top-0 ${labelAlign(i)}`}
            style={i === 0 || i === 21 ? undefined : { left: at(i * 10) }}
          >
            {tickLabel(i)}
          </span>
        ))}
        {TICKS.map((i) => (
          <span
            key={i}
            className={`absolute z-10 w-px bg-[#8a8a8a] ${i % 3 === 0 ? "top-3 h-[14px]" : "top-[15px] h-[11px]"}`}
            style={{ left: at(i * 10) }}
          />
        ))}
      </div>
      <div className="h-4 border-b border-black bg-[#1e1e1e]">
        <div className="relative z-20 mx-[7px] h-full">
          <div className="h-[15px] border-t border-black bg-[#383838]" style={{ width: at(WORK_END) }} />
          <span className="absolute top-px -left-[7px] h-[14px] w-1.5 rounded-l bg-[#2d8ceb]" />
          <span className="absolute top-px h-[14px] w-1.5 rounded-r bg-[#2d8ceb]" style={{ left: at(WORK_END) }} />
        </div>
      </div>
      <div className="relative mx-[7px] h-[3px]">
        <span className="absolute h-[3px] w-1.5 bg-[#1fae22]" style={{ left: at(PLAYHEAD) }} />
      </div>
      <div className="h-[18px] border-t border-b border-t-black border-b-[#1b1b1b] bg-[#444] px-[7px]">
        <div className="h-full border-t border-l border-t-[#8d95c4] border-l-[#c0c4dd] bg-linear-to-b from-[#4a558e] to-[#303c82]" />
      </div>
      <div className="relative">
        <div className="absolute inset-0 mx-[7px]">
          <div className="h-full bg-[#2d2d2d]" style={{ width: at(WORK_END) }} />
        </div>
        {ROWS.map((row, i) => (
          <div key={i} className="relative h-[17px] border-b border-[#1b1b1b]">
            <div className="relative mx-[7px] h-full">
              {row.animated ? (
                [0, 39].map((f) => (
                  <span key={f} className="absolute top-[3px] -translate-x-1/2" style={{ left: at(f) }}><Keyframe /></span>
                ))
              ) : (
                <span className="absolute top-0.5 -translate-x-1/2" style={{ left: at(PLAYHEAD) }}>
                  <IBeam active={row.name === "Wipe Angle"} />
                </span>
              )}
            </div>
          </div>
        ))}
        <div className="h-[17px]" />
      </div>
      <div className="pointer-events-none absolute inset-y-0 right-[7px] left-[7px] z-30">
        <div className="absolute top-[21px] bottom-0 flex -translate-x-1/2 flex-col items-center text-[#2d8ceb]" style={{ left: at(PLAYHEAD) }}>
          <Svg w={13} h={13} box="0 0 13 13">
            <path d="M0 0h13v6.500L6.500 13 0 6.500z" fill="currentColor" stroke="none" />
            <path stroke="#163f6d" strokeWidth="1" d="M6.500 6v7" />
          </Svg>
          <span className="w-px flex-1 bg-current" />
        </div>
        <span className="absolute top-[7px] h-2 w-px bg-[#2d8ceb]" style={{ left: at(PLAYHEAD) }} />
      </div>
    </div>
  );
}

function Timeline() {
  return (
    <section className="mx-px mb-px shrink-0 border border-[#3d7cc4] bg-[#232323]">
      <div className="flex h-[26px] items-center pl-2.5">
        <div className="flex h-full items-center border-b-2 border-[#b4b4b4] pt-0.5">
          <span className="w-[15px] text-[14px] leading-none">×</span>
          <span className="size-2.5 bg-[#67574a]" />
          <span className="ml-3 text-[#d8d8d8]">Comp 1</span>
          <Burger className="ml-2.5 text-[#c8c8c8]" />
        </div>
        <button type="button" className="ml-[37px]">(none)</button>
      </div>
      <div className="flex">
        <LayerTree />
        <Track />
        <div className="flex w-[17px] shrink-0 flex-col items-center bg-[#202020] pt-[38px]">
          <Svg w={12} h={14} box="0 0 12 14" className="text-[#a0a0a0]"><path d="M0 0h12v9l-6 5-6-5z" fill="currentColor" stroke="none" /></Svg>
          <span className="mt-[3px] h-px w-full bg-black" />
          <Svg w={15} h={15} box="0 0 15 15" className="mt-px"><path d="M7 3h8v7H7z" fill="currentColor" stroke="none" /><path d="M1 9 7 1v8" /><circle cx="7" cy="9.500" r="3.300" fill="#222" /></Svg>
        </div>
      </div>
      <div className="flex h-[17px] items-center border-t border-black bg-[#1e1e1e]">
        <div className="flex h-full w-[840px] items-center bg-[#232323] pl-1 text-[#2d8ceb]">
          <span className="flex h-[15px] w-[15px] items-center justify-center bg-[#181818]">
            <Svg w={12} h={12} box="0 0 12 12"><path strokeWidth="1.100" d="M1 7V1h6M3 9V3h6M5 5h6v6H5zM8 6.500v3M6.500 8h3" /></Svg>
          </span>
          <span className="ml-[3px] flex h-[15px] w-[15px] items-center justify-center bg-[#181818]">
            <Svg w={12} h={12} box="0 0 12 12"><circle cx="4.500" cy="4.500" r="3.600" /><path d="M5 5h6v6H5z" /></Svg>
          </span>
          <Svg w={13} h={13} box="0 0 13 13" className="ml-1 text-[#a0a0a0]">
            <path d="M5 1C3 1 3.500 3 3.500 4.500S2.500 6.500 1 6.500C2.500 6.500 3.500 7 3.500 8.500S3 12 5 12" />
            <path d="M8 1c2 0 1.500 2 1.500 3.500s1 2 2.500 2c-1.500 0-2.500.5-2.500 2S10 12 8 12" />
            <path stroke="#777" strokeWidth="4" d="M6.500 1v11" />
          </Svg>
          <div className="ml-auto flex items-center pr-[5px] text-[#a0a0a0]">
            <Svg w={11} h={6} box="0 0 11 6"><path d="M0 6l3-3 1 1 3-4 4 6z" fill="currentColor" stroke="none" /></Svg>
            <input
              type="range"
              aria-label="Timeline zoom"
              min={0}
              max={100}
              defaultValue={0}
              className="mr-3 ml-2.5 h-[3px] w-[49px] appearance-none rounded bg-[#3a3a3a] [&::-webkit-slider-thumb]:size-[11px] [&::-webkit-slider-thumb]:appearance-none [&::-webkit-slider-thumb]:rounded-full [&::-webkit-slider-thumb]:border-2 [&::-webkit-slider-thumb]:border-[#8a8a8a] [&::-webkit-slider-thumb]:bg-[#232323]"
            />
            <Svg w={17} h={8} box="0 0 17 8"><path d="M0 8 5 1l1.500 1-4 6zM4 8l6.500-8L17 8z" fill="currentColor" stroke="none" /></Svg>
          </div>
        </div>
      </div>
    </section>
  );
}

export default function App() {
  return (
    <div className="flex h-screen min-h-[760px] min-w-[1440px] flex-col overflow-hidden bg-[#161616] font-[Lato,sans-serif] text-[11px] leading-4 text-[#acacac]">
      <MenuBar />
      <ToolBar />
      <main className="mb-1 flex min-h-0 flex-1 gap-1 pl-px">
        <EffectControls />
        <Composition />
        <SidePanels />
      </main>
      <Timeline />
    </div>
  );
}
